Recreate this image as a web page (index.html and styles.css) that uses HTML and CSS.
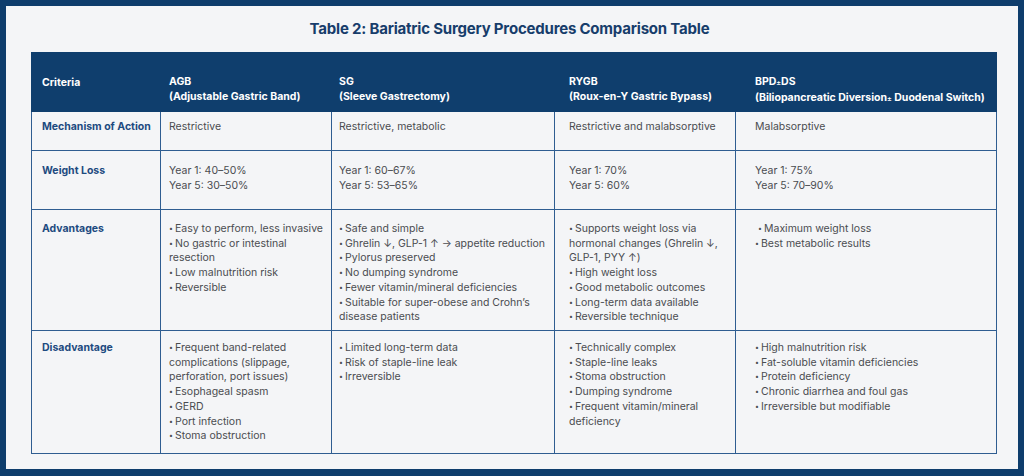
FILE: index.html
```html
<!DOCTYPE html>
<html>
<head>
<meta charset="utf-8">
<link rel="stylesheet" href="styles.css">
</head>
<body>
<div class="panel">
  <h1 class="title">Table 2: Bariatric Surgery Procedures Comparison Table</h1>
  <table class="cmp">
    <colgroup>
      <col class="c1"><col class="c2"><col class="c3"><col class="c4"><col class="c5">
    </colgroup>
    <thead>
      <tr>
        <th>Criteria</th>
        <th>AGB<br>(Adjustable Gastric Band)</th>
        <th>SG<br>(Sleeve Gastrectomy)</th>
        <th>RYGB<br>(Roux-en-Y Gastric Bypass)</th>
        <th>BPD<span class="pm">±</span>DS<br>(Biliopancreatic Diversion<span class="pm">±</span> Duodenal Switch)</th>
      </tr>
    </thead>
    <tbody>
      <tr class="r-mech">
        <td class="lbl">Mechanism of Action</td>
        <td>Restrictive</td>
        <td>Restrictive, metabolic</td>
        <td>Restrictive and malabsorptive</td>
        <td>Malabsorptive</td>
      </tr>
      <tr class="r-wl">
        <td class="lbl">Weight Loss</td>
        <td>Year 1: 40–50%<br>Year 5: 30–50%</td>
        <td>Year 1: 60–67%<br>Year 5: 53–65%</td>
        <td>Year 1: 70%<br>Year 5: 60%</td>
        <td>Year 1: 75%<br>Year 5: 70–90%</td>
      </tr>
      <tr class="r-adv">
        <td class="lbl">Advantages</td>
        <td><ul class="bl">
          <li>Easy to perform, less invasive</li>
          <li>No gastric or intestinal resection</li>
          <li>Low malnutrition risk</li>
          <li>Reversible</li>
        </ul></td>
        <td><ul class="bl">
          <li>Safe and simple</li>
          <li>Ghrelin ↓, GLP-1 ↑ → appetite reduction</li>
          <li>Pylorus preserved</li>
          <li>No dumping syndrome</li>
          <li>Fewer vitamin/mineral deficiencies</li>
          <li>Suitable for super-obese and Crohn’s disease patients</li>
        </ul></td>
        <td><ul class="bl">
          <li>Supports weight loss via hormonal changes (Ghrelin ↓, GLP-1, PYY ↑)</li>
          <li>High weight loss</li>
          <li>Good metabolic outcomes</li>
          <li>Long-term data available</li>
          <li>Reversible technique</li>
        </ul></td>
        <td><ul class="bl">
          <li class="nudge">Maximum weight loss</li>
          <li>Best metabolic results</li>
        </ul></td>
      </tr>
      <tr class="r-dis">
        <td class="lbl">Disadvantage</td>
        <td><ul class="bl">
          <li>Frequent band-related complications (slippage, perforation, port issues)</li>
          <li>Esophageal spasm</li>
          <li>GERD</li>
          <li>Port infection</li>
          <li>Stoma obstruction</li>
        </ul></td>
        <td><ul class="bl">
          <li>Limited long-term data</li>
          <li>Risk of staple-line leak</li>
          <li>Irreversible</li>
        </ul></td>
        <td><ul class="bl">
          <li>Technically complex</li>
          <li>Staple-line leaks</li>
          <li>Stoma obstruction</li>
          <li>Dumping syndrome</li>
          <li>Frequent vitamin/mineral deficiency</li>
        </ul></td>
        <td><ul class="bl">
          <li>High malnutrition risk</li>
          <li>Fat-soluble vitamin deficiencies</li>
          <li>Protein deficiency</li>
          <li>Chronic diarrhea and foul gas</li>
          <li>Irreversible but modifiable</li>
        </ul></td>
      </tr>
    </tbody>
  </table>
</div>
</body>
</html>
```

FILE: styles.css
```css
html, body {
  margin: 0;
  padding: 0;
}
body {
  background: #0e3d6c;
  width: 1024px;
  height: 476px;
  overflow: hidden;
  font-family: Inter, "Liberation Sans", sans-serif;
}
.panel {
  margin: 6px;
  width: 1012px;
  height: 463px;
  box-sizing: border-box;
  background: #f4f5f7;
  padding: 0 22px 0 25px;
}
.title {
  margin: 0;
  height: 46px;
  box-sizing: border-box;
  padding-top: 14px;
  padding-right: 8px;
  font-size: 15px;
  line-height: 18px;
  font-weight: 700;
  color: #173d6b;
  text-align: center;
  letter-spacing: -0.2px;
}
.cmp {
  width: 965px;
  border-collapse: collapse;
  table-layout: fixed;
  font-size: 10.5px;
  line-height: 14.7px;
  color: #4a4c50;
}
.c1 { width: 129px; }
.c2 { width: 171px; }
.c3 { width: 223px; }
.c4 { width: 181px; }
.c5 { width: 261px; }
.cmp th {
  background: #0f3e6d;
  color: #ffffff;
  font-weight: 700;
  text-align: left;
  vertical-align: top;
  height: 59px;
  box-sizing: border-box;
  padding: 22px 4px 2px 8px;
  border: 1.5px solid #0f3e6d;
}
.cmp th:first-child {
  vertical-align: middle;
  padding-top: 4px;
}
.pm {
  font-size: 7px;
}
.cmp td {
  vertical-align: top;
  border: 1.5px solid #2f5d91;
  padding: 8px 4px 2px 8px;
  text-align: left;
  box-sizing: border-box;
}
.cmp th:nth-child(1), .cmp td:nth-child(1) { padding-left: 10px; }
.cmp th:nth-child(2), .cmp td:nth-child(2) { padding-left: 8px; }
.cmp th:nth-child(3), .cmp td:nth-child(3) { padding-left: 7px; }
.cmp th:nth-child(4), .cmp td:nth-child(4) { padding-left: 14px; }
.cmp th:nth-child(5), .cmp td:nth-child(5) { padding-left: 19px; }
.cmp td.lbl {
  color: #1d4a80;
  font-weight: 700;
}
.bl {
  list-style: none;
  margin: 0;
  padding: 0;
}
.bl li::before {
  content: "•";
  font-size: 7px;
  display: inline-block;
  width: 6px;
  vertical-align: 1px;
}
.bl li.nudge {
  padding-left: 3px;
}
.r-mech td { height: 39px; padding-top: 8px; }
.r-wl td { height: 59px; padding-top: 13px; }
.r-adv td { height: 121px; padding-top: 12px; }
.r-dis td { height: 123px; padding-top: 10px; }
```
